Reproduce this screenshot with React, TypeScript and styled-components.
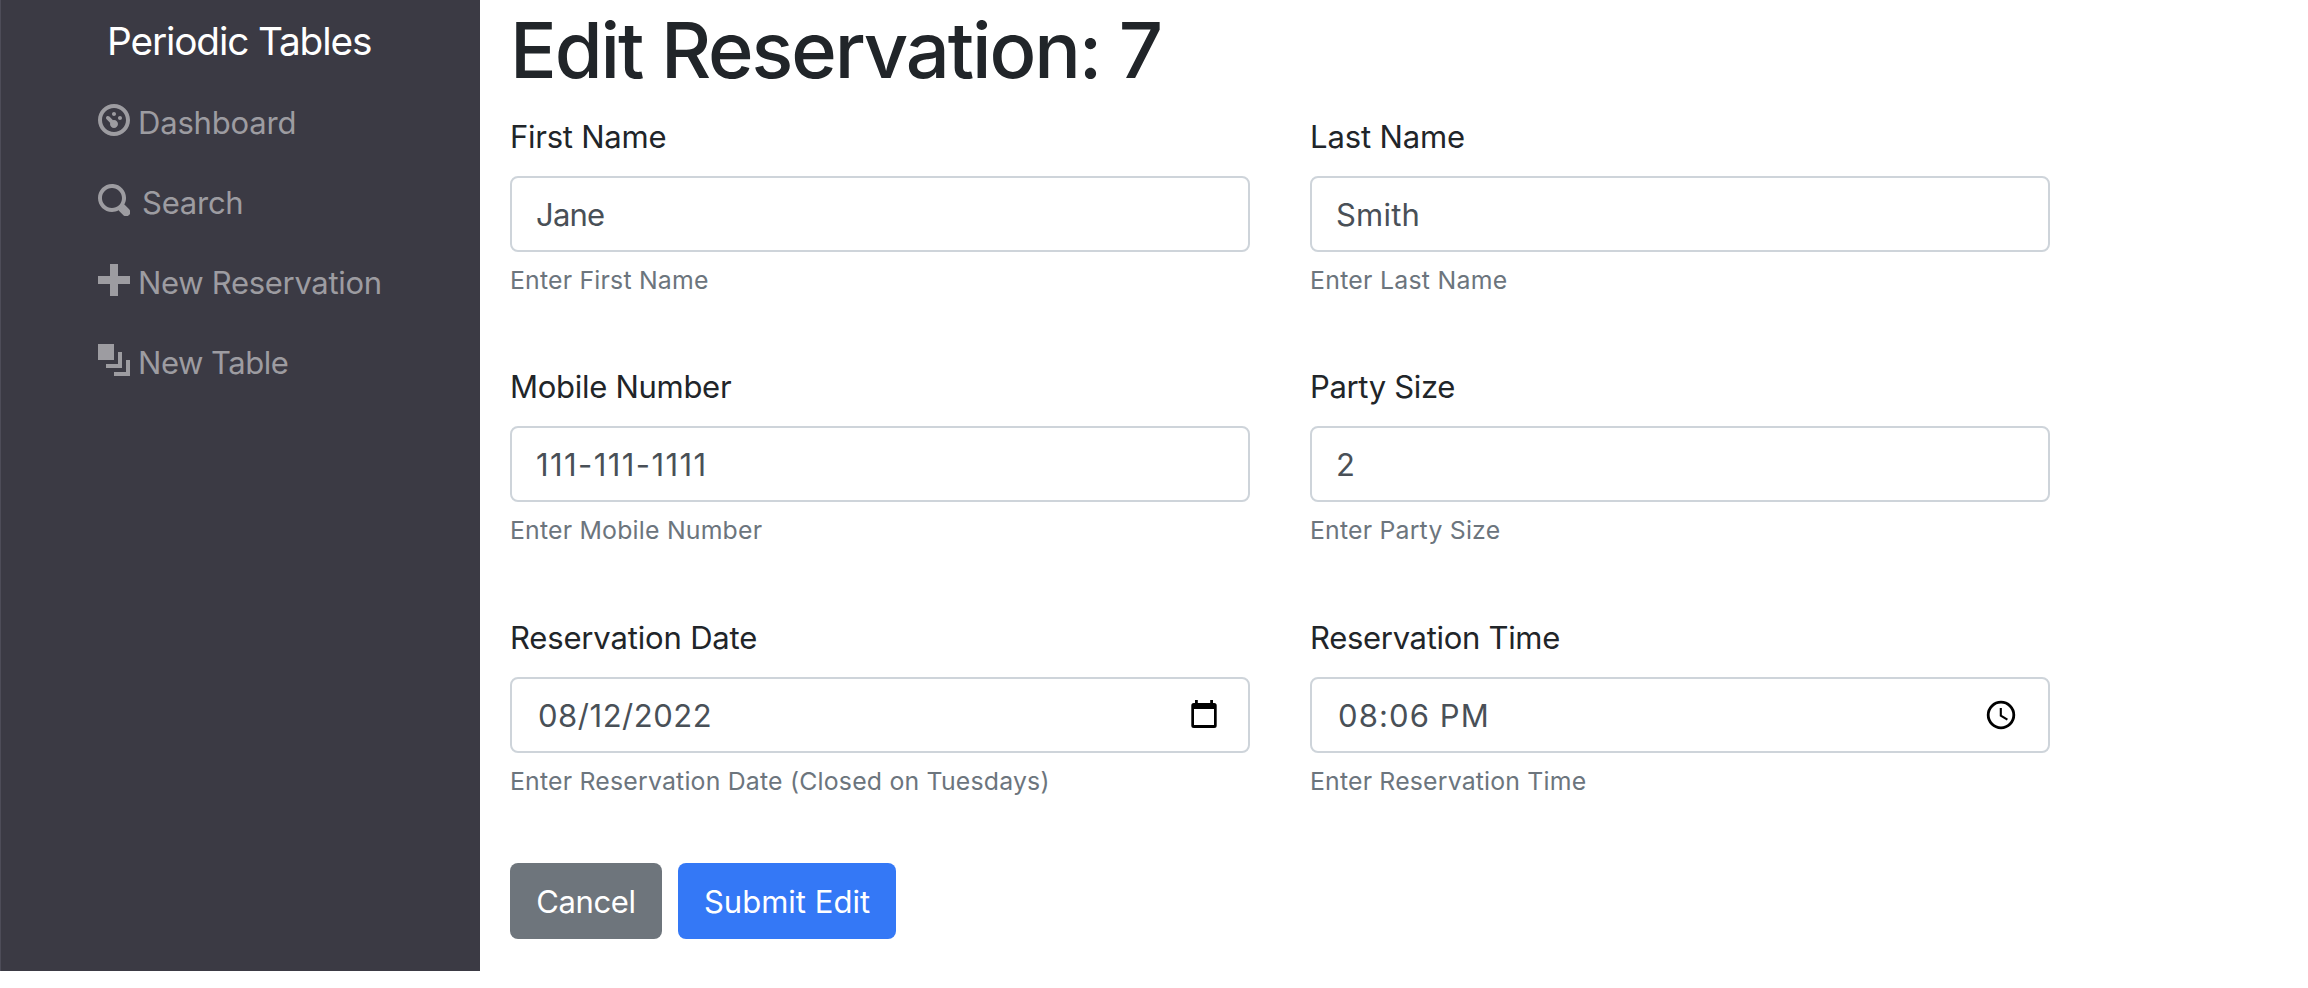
import React from "react";
import styled, { createGlobalStyle } from "styled-components";

const GlobalStyle = createGlobalStyle`
  *, *::before, *::after { box-sizing: border-box; }
  body {
    margin: 0;
    background: #fff;
    color: #212529;
    font-family: Inter, "Liberation Sans", sans-serif;
    font-size: 31.04px;
    font-weight: 440;
    line-height: 48px;
  }
`;

const Page = styled.div`
  display: flex;
  align-items: flex-start;
  height: 988px;
  overflow: hidden;
`;

const Sidebar = styled.nav`
  flex: none;
  width: 480px;
  height: 971px;
  padding: 11px 0 0 96px;
  background: #3b3a44;
  border-left: 1px solid #4d4c58;
`;

const Brand = styled.a`
  display: block;
  margin-left: 10px;
  color: #fff;
  font-size: 38.8px;
  line-height: 60px;
  letter-spacing: -1.15px;
  white-space: nowrap;
`;

const NavList = styled.ul`
  display: flex;
  flex-direction: column;
  gap: 32px;
  margin: 28px 0 0;
  padding: 0;
  list-style: none;
`;

const NavLink = styled.a<{ $gap: number; $tracking: number }>`
  display: flex;
  align-items: flex-start;
  gap: ${(p) => p.$gap}px;
  height: 48px;
  padding-left: 1px;
  color: #9d9ca1;
  letter-spacing: ${(p) => p.$tracking}px;
  white-space: nowrap;
`;

const NavIcon = styled.svg`
  flex: none;
  width: 32px;
  height: 32px;
  margin-top: 5px;
  fill: currentColor;
`;

const Main = styled.main`
  width: 1600px;
  padding: 0 30px;
`;

const Title = styled.h1`
  height: 96px;
  margin: 0 0 16px;
  padding-top: 2px;
  font-size: 77.6px;
  font-weight: 550;
  line-height: 96px;
  letter-spacing: -2.1px;
  white-space: nowrap;
`;

const FieldGrid = styled.div`
  display: grid;
  grid-template-columns: 740px 740px;
  grid-auto-rows: 250.4px;
  column-gap: 60px;
`;

const Field = styled.div`
  display: flex;
  flex-direction: column;
`;

const Label = styled.label<{ $tracking: number }>`
  margin-bottom: 15px;
  padding-top: 1px;
  letter-spacing: ${(p) => p.$tracking}px;
`;

const Control = styled.div<{ $inset: number }>`
  display: flex;
  align-items: center;
  justify-content: space-between;
  height: 76px;
  padding: 0 24px 0 ${(p) => 24 + p.$inset}px;
  border: 2px solid #ced4da;
  border-radius: 8px;
  background: #fff;
`;

const Input = styled.input<{ $tracking: number }>`
  flex: 1;
  min-width: 0;
  height: 49px;
  padding: 1px 0 0;
  border: 0;
  outline: 0;
  background: transparent;
  color: #495057;
  font: inherit;
  letter-spacing: ${(p) => p.$tracking}px;
`;

const Hint = styled.small<{ $tracking: number }>`
  margin-top: 9px;
  color: #6c757d;
  font-size: 24.83px;
  line-height: 38.4px;
  letter-spacing: ${(p) => p.$tracking}px;
`;

const CalendarGlyph = styled.svg`
  flex: none;
  width: 26px;
  height: 28px;
  margin: 0 7px 2px 0;
`;

const ClockGlyph = styled.svg`
  flex: none;
  width: 30px;
  height: 30px;
  margin-right: 8px;
`;

const Actions = styled.div`
  display: flex;
  gap: 16px;
`;

const Button = styled.button<{ $bg: string; $width: number; $tracking: number }>`
  width: ${(p) => p.$width}px;
  height: 76px;
  padding: 2px 0 0;
  border: 0;
  border-radius: 8px;
  background: ${(p) => p.$bg};
  color: #fff;
  font: inherit;
  letter-spacing: ${(p) => p.$tracking}px;
`;

const ICONS = {
  dashboard:
    "M4 0c-2.2 0-4 1.8-4 4s1.8 4 4 4 4-1.8 4-4-1.8-4-4-4zm0 1c1.66 0 3 1.34 3 3s-1.34 3-3 3-3-1.34-3-3 1.34-3 3-3zm0 1c-.28 0-.5.22-.5.5s.22.5.5.5.5-.22.5-.5-.22-.5-.5-.5zm-1.66 1a.5.5 0 0 0-.19.84l.91.91c-.02.08-.06.16-.06.25 0 .55.45 1 1 1s1-.45 1-1-.45-1-1-1c-.09 0-.17.04-.25.06l-.91-.91a.5.5 0 0 0-.44-.16.5.5 0 0 0-.06 0zm3.16 0c-.28 0-.5.22-.5.5s.22.5.5.5.5-.22.5-.5-.22-.5-.5-.5z",
  search:
    "M3.5 0c-1.93 0-3.5 1.57-3.5 3.5s1.57 3.5 3.5 3.5c.59 0 1.17-.14 1.66-.41a1 1 0 0 0 .13.13l1 1a1.02 1.02 0 1 0 1.44-1.44l-1-1a1 1 0 0 0-.16-.13c.27-.49.44-1.06.44-1.66 0-1.93-1.55-3.5-3.5-3.5zm0 1c1.39 0 2.5 1.11 2.5 2.5 0 .66-.24 1.27-.66 1.72l-.03.03a1 1 0 0 0-.13.13c-.44.4-1.04.63-1.69.63-1.39 0-2.5-1.11-2.5-2.5s1.11-2.5 2.5-2.5z",
  plus: "M3 0v3h-3v2h3v3h2v-3h3v-2h-3v-3h-2z",
  layers: "M0 0v4h4v-4h-4zm5 2v3h-3v1h4v-4h-1zm2 2v3h-3v1h4v-4h-1z",
};

const NAV = [
  { text: "Dashboard", icon: ICONS.dashboard, gap: 8, tracking: -0.2 },
  { text: "Search", icon: ICONS.search, gap: 12, tracking: -0.25 },
  { text: "New Reservation", icon: ICONS.plus, gap: 8, tracking: -0.32 },
  { text: "New Table", icon: ICONS.layers, gap: 8, tracking: -0.5 },
];

type FieldSpec = {
  id: string;
  label: string;
  labelTracking: number;
  value: string;
  valueTracking: number;
  hint: string;
  hintTracking: number;
  picker?: "date" | "time";
};

const FIELDS: FieldSpec[] = [
  { id: "first_name", label: "First Name", labelTracking: -0.26, value: "Jane", valueTracking: -0.8, hint: "Enter First Name", hintTracking: 0.2 },
  { id: "last_name", label: "Last Name", labelTracking: -0.14, value: "Smith", valueTracking: 0.2, hint: "Enter Last Name", hintTracking: 0.27 },
  { id: "mobile_number", label: "Mobile Number", labelTracking: -0.3, value: "111-111-1111", valueTracking: 1.4, hint: "Enter Mobile Number", hintTracking: 0.2 },
  { id: "people", label: "Party Size", labelTracking: -0.36, value: "2", valueTracking: 0, hint: "Enter Party Size", hintTracking: 0.2 },
  { id: "reservation_date", label: "Reservation Date", labelTracking: -0.18, value: "08/12/2022", valueTracking: 0.52, hint: "Enter Reservation Date (Closed on Tuesdays)", hintTracking: 0.2, picker: "date" },
  { id: "reservation_time", label: "Reservation Time", labelTracking: -0.32, value: "08:06 PM", valueTracking: 1.1, hint: "Enter Reservation Time", hintTracking: 0.18, picker: "time" },
];

const CalendarIcon = () => (
  <CalendarGlyph viewBox="0 0 26 28">
    <path
      fillRule="evenodd"
      d="M4 0h2.8v3h12.4V0H22v3h1.2A2.5 2.5 0 0 1 25.7 5.5v20a2.5 2.5 0 0 1-2.5 2.5H2.8A2.5 2.5 0 0 1 .3 25.5v-20A2.5 2.5 0 0 1 2.8 3H4zM3 9v16h20V9z"
    />
  </CalendarGlyph>
);

const ClockIcon = () => (
  <ClockGlyph viewBox="0 0 30 30" fill="none" stroke="#000">
    <circle cx="15" cy="15" r="12.8" strokeWidth="2.8" />
    <path d="M14.8 8v7.6l6.6 4" strokeWidth="2.1" />
  </ClockGlyph>
);

export default function App() {
  return (
    <>
      <GlobalStyle />
      <Page>
        <Sidebar>
          <Brand>Periodic Tables</Brand>
          <NavList>
            {NAV.map((item) => (
              <li key={item.text}>
                <NavLink $gap={item.gap} $tracking={item.tracking}>
                  <NavIcon viewBox="0 0 8 8">
                    <path d={item.icon} />
                  </NavIcon>
                  {item.text}
                </NavLink>
              </li>
            ))}
          </NavList>
        </Sidebar>
        <Main>
          <Title>Edit Reservation: 7</Title>
          <FieldGrid>
            {FIELDS.map((f) => (
              <Field key={f.id}>
                <Label htmlFor={f.id} $tracking={f.labelTracking}>
                  {f.label}
                </Label>
                <Control $inset={f.picker ? 2 : 0}>
                  <Input id={f.id} defaultValue={f.value} $tracking={f.valueTracking} />
                  {f.picker === "date" && <CalendarIcon />}
                  {f.picker === "time" && <ClockIcon />}
                </Control>
                <Hint $tracking={f.hintTracking}>{f.hint}</Hint>
              </Field>
            ))}
          </FieldGrid>
          <Actions>
            <Button type="button" $bg="#6e757c" $width={152} $tracking={-0.4}>
              Cancel
            </Button>
            <Button type="submit" $bg="#3478f6" $width={218} $tracking={0}>
              Submit Edit
            </Button>
          </Actions>
        </Main>
      </Page>
    </>
  );
}
